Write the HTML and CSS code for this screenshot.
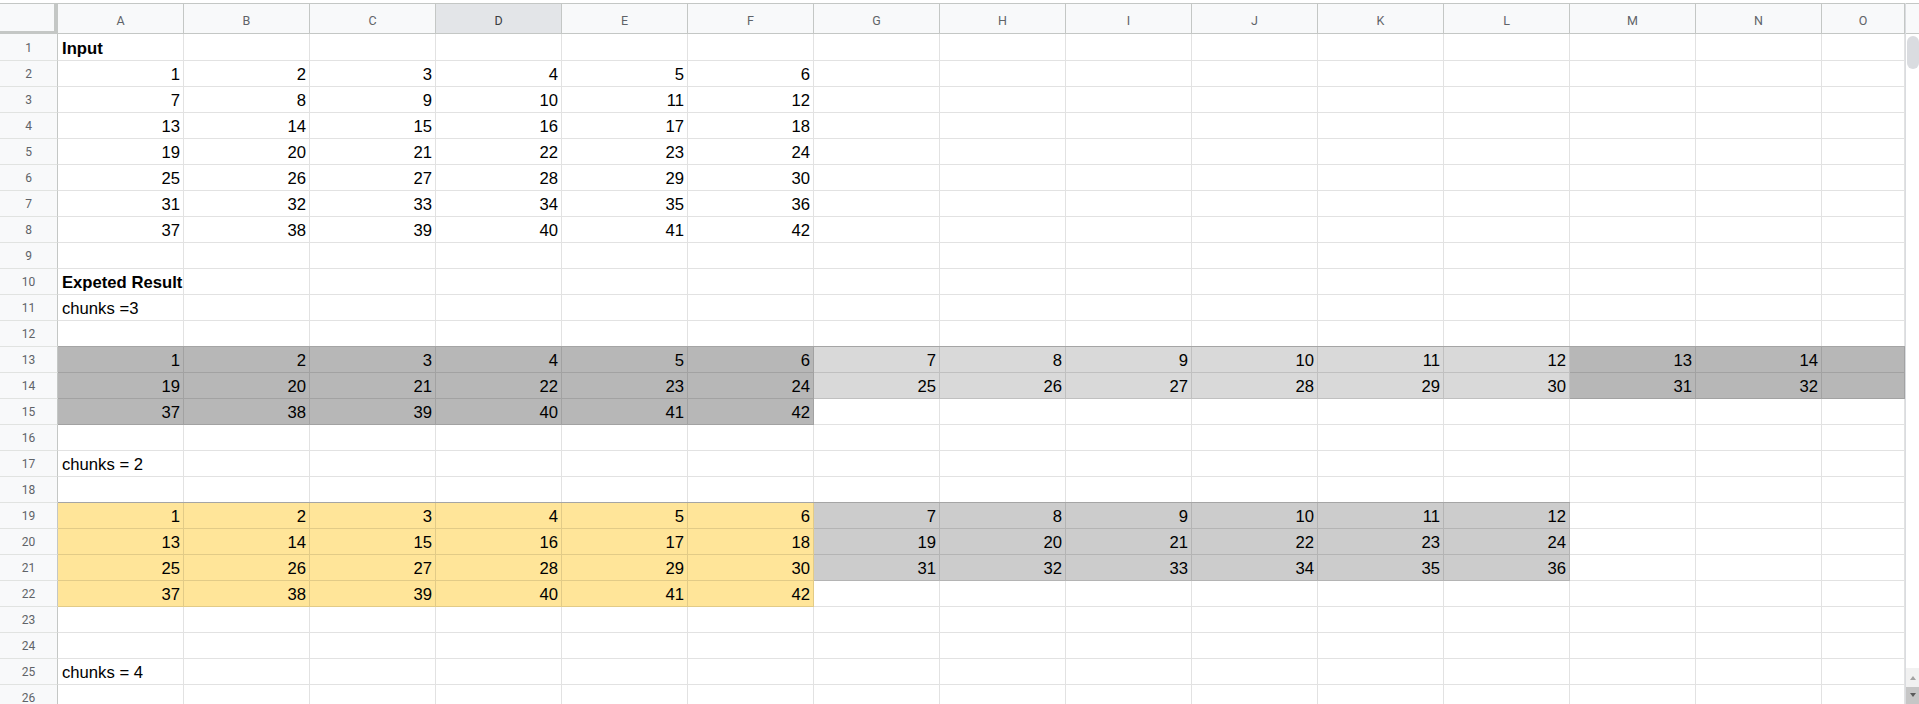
FILE: index.html
```html
<!DOCTYPE html>
<html lang="en">
<head>
<meta charset="utf-8">
<title>Sheet</title>
<link rel="stylesheet" href="styles.css">
</head>
<body>
<div class="app">
  <div class="sheet">
    <div class="row hdr">
      <span class="corner"></span>
      <span class="ch">A</span><span class="ch">B</span><span class="ch">C</span><span class="ch sel">D</span><span class="ch">E</span><span class="ch">F</span><span class="ch">G</span><span class="ch">H</span><span class="ch">I</span><span class="ch">J</span><span class="ch">K</span><span class="ch">L</span><span class="ch">M</span><span class="ch">N</span><span class="ch">O</span>
    </div>
    <div class="row first"><span class="rh">1</span><span class="b">Input</span><span></span><span></span><span></span><span></span><span></span><span></span><span></span><span></span><span></span><span></span><span></span><span></span><span></span><span></span></div>
    <div class="row"><span class="rh">2</span><span class="n">1</span><span class="n">2</span><span class="n">3</span><span class="n">4</span><span class="n">5</span><span class="n">6</span><span></span><span></span><span></span><span></span><span></span><span></span><span></span><span></span><span></span></div>
    <div class="row"><span class="rh">3</span><span class="n">7</span><span class="n">8</span><span class="n">9</span><span class="n">10</span><span class="n">11</span><span class="n">12</span><span></span><span></span><span></span><span></span><span></span><span></span><span></span><span></span><span></span></div>
    <div class="row"><span class="rh">4</span><span class="n">13</span><span class="n">14</span><span class="n">15</span><span class="n">16</span><span class="n">17</span><span class="n">18</span><span></span><span></span><span></span><span></span><span></span><span></span><span></span><span></span><span></span></div>
    <div class="row"><span class="rh">5</span><span class="n">19</span><span class="n">20</span><span class="n">21</span><span class="n">22</span><span class="n">23</span><span class="n">24</span><span></span><span></span><span></span><span></span><span></span><span></span><span></span><span></span><span></span></div>
    <div class="row"><span class="rh">6</span><span class="n">25</span><span class="n">26</span><span class="n">27</span><span class="n">28</span><span class="n">29</span><span class="n">30</span><span></span><span></span><span></span><span></span><span></span><span></span><span></span><span></span><span></span></div>
    <div class="row"><span class="rh">7</span><span class="n">31</span><span class="n">32</span><span class="n">33</span><span class="n">34</span><span class="n">35</span><span class="n">36</span><span></span><span></span><span></span><span></span><span></span><span></span><span></span><span></span><span></span></div>
    <div class="row"><span class="rh">8</span><span class="n">37</span><span class="n">38</span><span class="n">39</span><span class="n">40</span><span class="n">41</span><span class="n">42</span><span></span><span></span><span></span><span></span><span></span><span></span><span></span><span></span><span></span></div>
    <div class="row"><span class="rh">9</span><span></span><span></span><span></span><span></span><span></span><span></span><span></span><span></span><span></span><span></span><span></span><span></span><span></span><span></span><span></span></div>
    <div class="row"><span class="rh">10</span><span class="b">Expeted Result</span><span></span><span></span><span></span><span></span><span></span><span></span><span></span><span></span><span></span><span></span><span></span><span></span><span></span><span></span></div>
    <div class="row"><span class="rh">11</span><span>chunks =3</span><span></span><span></span><span></span><span></span><span></span><span></span><span></span><span></span><span></span><span></span><span></span><span></span><span></span><span></span></div>
    <div class="row"><span class="rh">12</span><span></span><span></span><span></span><span></span><span></span><span></span><span></span><span></span><span></span><span></span><span></span><span></span><span></span><span></span><span></span></div>
    <div class="row"><span class="rh">13</span><span class="n dk top">1</span><span class="n dk top">2</span><span class="n dk top">3</span><span class="n dk top">4</span><span class="n dk top">5</span><span class="n dk top">6</span><span class="n lt top">7</span><span class="n lt top">8</span><span class="n lt top">9</span><span class="n lt top">10</span><span class="n lt top">11</span><span class="n lt top">12</span><span class="n dk top">13</span><span class="n dk top">14</span><span class="dk top"></span></div>
    <div class="row"><span class="rh">14</span><span class="n dk">19</span><span class="n dk">20</span><span class="n dk">21</span><span class="n dk">22</span><span class="n dk">23</span><span class="n dk">24</span><span class="n lt">25</span><span class="n lt">26</span><span class="n lt">27</span><span class="n lt">28</span><span class="n lt">29</span><span class="n lt">30</span><span class="n dk">31</span><span class="n dk">32</span><span class="dk"></span></div>
    <div class="row"><span class="rh">15</span><span class="n dk">37</span><span class="n dk">38</span><span class="n dk">39</span><span class="n dk">40</span><span class="n dk">41</span><span class="n dk">42</span><span></span><span></span><span></span><span></span><span></span><span></span><span></span><span></span><span></span></div>
    <div class="row"><span class="rh">16</span><span></span><span></span><span></span><span></span><span></span><span></span><span></span><span></span><span></span><span></span><span></span><span></span><span></span><span></span><span></span></div>
    <div class="row"><span class="rh">17</span><span>chunks = 2</span><span></span><span></span><span></span><span></span><span></span><span></span><span></span><span></span><span></span><span></span><span></span><span></span><span></span><span></span></div>
    <div class="row"><span class="rh">18</span><span></span><span></span><span></span><span></span><span></span><span></span><span></span><span></span><span></span><span></span><span></span><span></span><span></span><span></span><span></span></div>
    <div class="row"><span class="rh">19</span><span class="n yl top">1</span><span class="n yl top">2</span><span class="n yl top">3</span><span class="n yl top">4</span><span class="n yl top">5</span><span class="n yl top">6</span><span class="n gy top">7</span><span class="n gy top">8</span><span class="n gy top">9</span><span class="n gy top">10</span><span class="n gy top">11</span><span class="n gy top">12</span><span></span><span></span><span></span></div>
    <div class="row"><span class="rh">20</span><span class="n yl">13</span><span class="n yl">14</span><span class="n yl">15</span><span class="n yl">16</span><span class="n yl">17</span><span class="n yl">18</span><span class="n gy">19</span><span class="n gy">20</span><span class="n gy">21</span><span class="n gy">22</span><span class="n gy">23</span><span class="n gy">24</span><span></span><span></span><span></span></div>
    <div class="row"><span class="rh">21</span><span class="n yl">25</span><span class="n yl">26</span><span class="n yl">27</span><span class="n yl">28</span><span class="n yl">29</span><span class="n yl">30</span><span class="n gy">31</span><span class="n gy">32</span><span class="n gy">33</span><span class="n gy">34</span><span class="n gy">35</span><span class="n gy">36</span><span></span><span></span><span></span></div>
    <div class="row"><span class="rh">22</span><span class="n yl">37</span><span class="n yl">38</span><span class="n yl">39</span><span class="n yl">40</span><span class="n yl">41</span><span class="n yl">42</span><span></span><span></span><span></span><span></span><span></span><span></span><span></span><span></span><span></span></div>
    <div class="row"><span class="rh">23</span><span></span><span></span><span></span><span></span><span></span><span></span><span></span><span></span><span></span><span></span><span></span><span></span><span></span><span></span><span></span></div>
    <div class="row"><span class="rh">24</span><span></span><span></span><span></span><span></span><span></span><span></span><span></span><span></span><span></span><span></span><span></span><span></span><span></span><span></span><span></span></div>
    <div class="row"><span class="rh">25</span><span>chunks = 4</span><span></span><span></span><span></span><span></span><span></span><span></span><span></span><span></span><span></span><span></span><span></span><span></span><span></span><span></span></div>
    <div class="row"><span class="rh">26</span><span></span><span></span><span></span><span></span><span></span><span></span><span></span><span></span><span></span><span></span><span></span><span></span><span></span><span></span><span></span></div>
  </div>
  <div class="vscroll">
    <div class="vs-head"></div>
    <div class="vs-track"><div class="thumb"></div></div>
    <div class="vs-btn up"><span class="tri-up"></span></div>
    <div class="vs-btn down"><span class="tri-down"></span></div>
  </div>
</div>
</body>
</html>
```
FILE: styles.css
```css
html, body {
  margin: 0;
  padding: 0;
  background: #ffffff;
}

.app {
  display: flex;
  width: 1919px;
  height: 704px;
  padding-top: 3px;
  box-sizing: border-box;
  overflow: hidden;
}

.sheet {
  width: 1905px;
  flex: none;
  font-family: "Liberation Sans", Arial, sans-serif;
  font-size: 16.67px;
  color: #000000;
}

.row {
  display: grid;
  grid-template-columns: 58px repeat(14, 126px) 83px;
  height: 26px;
}

.row.first {
  height: 27px;
}

.row > span {
  box-sizing: border-box;
  display: flex;
  align-items: flex-end;
  padding: 0 3px 2px 4px;
  line-height: 19px;
  white-space: nowrap;
  border-right: 1px solid rgba(0, 0, 0, 0.115);
  border-bottom: 1px solid rgba(0, 0, 0, 0.115);
  min-width: 0;
}

.row > span.n {
  justify-content: flex-end;
}

.row > span.b {
  font-weight: bold;
}

.row > span.dk { background-color: #b7b7b7; }
.row > span.lt { background-color: #d9d9d9; }
.row > span.gy { background-color: #cccccc; }
.row > span.yl { background-color: #ffe599; }

.row > span.top {
  box-shadow: 0 -1px 0 rgba(0, 0, 0, 0.27);
}

.row > span.rh {
  background: #f8f9fa;
  border-right: 1px solid #c4c7c5;
  border-bottom: 1px solid #e1e3e1;
  justify-content: center;
  align-items: center;
  padding: 1px 0 0 0;
  font-family: Roboto, "Liberation Sans", Arial, sans-serif;
  font-size: 12px;
  line-height: 14px;
  color: #5f6368;
}

.row.hdr {
  height: 31px;
  border-top: 1px solid #c4c7c5;
  box-sizing: border-box;
}

.row.hdr > span {
  background: #f8f9fa;
  border-right: 1px solid #c4c7c5;
  border-bottom: 1px solid #c4c7c5;
  justify-content: center;
  align-items: center;
  padding: 3px 0 0 0;
  font-family: Roboto, "Liberation Sans", Arial, sans-serif;
  font-size: 12.5px;
  line-height: 15px;
  color: #5f6368;
}

.row.hdr > span.corner {
  border-right: 4px solid #c4c7c5;
  border-bottom: 3px solid #c4c7c5;
}

.row.hdr > span.sel {
  background: #e3e5e8;
  color: #3c4043;
}

.vscroll {
  width: 14px;
  flex: none;
  display: flex;
  flex-direction: column;
  box-sizing: border-box;
  border-left: 1px solid #dadce0;
}

.vs-head {
  height: 31px;
  flex: none;
  box-sizing: border-box;
  background: #f8f9fa;
  border-top: 1px solid #c4c7c5;
  border-bottom: 1px solid #c4c7c5;
}

.vs-track {
  flex: 1;
  padding: 2px 0 0 1px;
}

.thumb {
  width: 12px;
  height: 33px;
  border-radius: 6px;
  background: #dadce0;
}

.vs-btn {
  flex: none;
  display: flex;
  justify-content: center;
  align-items: center;
}

.vs-btn.up {
  height: 19px;
  background: #f1f1f1;
}

.vs-btn.down {
  height: 17px;
  background: #c6c6c6;
  align-items: flex-start;
  padding-top: 6px;
  box-sizing: border-box;
}

.tri-up {
  width: 0;
  height: 0;
  border-left: 3.5px solid transparent;
  border-right: 3.5px solid transparent;
  border-bottom: 4px solid #a3a3a3;
}

.tri-down {
  width: 0;
  height: 0;
  border-left: 3.5px solid transparent;
  border-right: 3.5px solid transparent;
  border-top: 4px solid #5a5a5a;
}
```
